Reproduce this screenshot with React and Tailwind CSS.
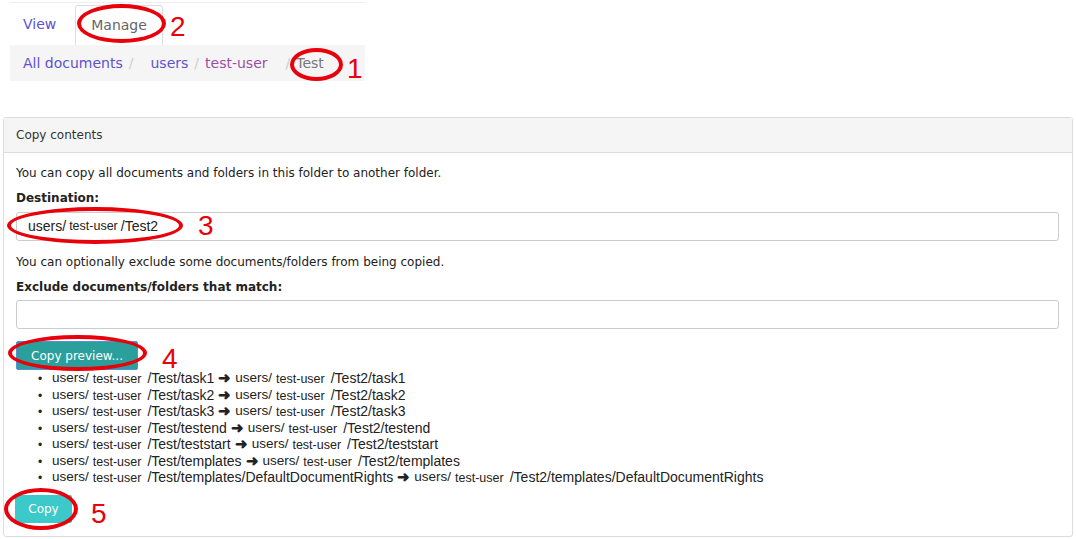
import React from 'react';

const items = [
  ['/Test/task1', '/Test2/task1'],
  ['/Test/task2', '/Test2/task2'],
  ['/Test/task3', '/Test2/task3'],
  ['/Test/testend', '/Test2/testend'],
  ['/Test/teststart', '/Test2/teststart'],
  ['/Test/templates', '/Test2/templates'],
  ['/Test/templates/DefaultDocumentRights', '/Test2/templates/DefaultDocumentRights'],
];

const Path = ({ rest }) => (
  <>
    <span className="text-[13.5px] relative top-[-1px]">users/</span>
    <span className="ml-[4px] text-[12.5px]">test-user</span>
    <span className="ml-[6px] text-[14px]">{rest}</span>
  </>
);

// red annotation ring + number
const Mark = ({ ring, num, numPos }) => (
  <>
    <div className={`absolute border-[4px] border-[#e8000b] rounded-[50%] ${ring}`} />
    <div
      className={`absolute text-[#e8000b] text-[28px] leading-none ${numPos}`}
      style={{ fontFamily: '"Liberation Sans", sans-serif' }}
    >
      {num}
    </div>
  </>
);

export default function App() {
  return (
    <div
      className="relative w-[1076px] h-[539px] bg-white overflow-hidden text-[#222]"
      style={{ fontFamily: '"DejaVu Sans", Verdana, sans-serif' }}
    >
      {/* tabs + breadcrumb */}
      <div className="ml-[10px] w-[355px] mt-[2px] border-t border-[#eee]">
        <div className="flex items-end h-[42px] text-[14px]">
          <a className="px-[13px] pb-[10px] text-[#5f52cf]">View</a>
          <div className="ml-[6px] h-[40px] px-[15px] flex items-center border border-b-0 border-[#ddd] rounded-t-[3px] bg-white text-[#666]">
            Manage
          </div>
        </div>
        <div className="h-[36px] bg-[#f5f5f5] flex items-center px-[13px] text-[14px]">
          <span className="text-[#5f52cf]">All documents</span>
          <span className="text-[#ccc] mx-[6px]">/</span>
          <span className="ml-[11px] text-[#5f52cf]">users</span>
          <span className="text-[#ccc] mx-[6px]">/</span>
          <span className="text-[#9a4fa8]">test-user</span>
          <span className="ml-[18px] mr-[6px] text-[#ccc]">/</span>
          <span className="text-[#777]">Test</span>
        </div>
      </div>

      {/* panel */}
      <div className="mx-[3px] mt-[36px] h-[420px] border border-[#ddd] rounded-[3px] bg-white">
        <div className="h-[35px] bg-[#f5f5f5] border-b border-[#ddd] flex items-center px-[12px] text-[12px] text-[#333]">
          Copy contents
        </div>
        <div className="px-[12px] pt-[12px] text-[12px]">
          <div className="leading-[16px]">You can copy all documents and folders in this folder to another folder.</div>
          <div className="mt-[9px] leading-[16px] font-bold">Destination:</div>
          <div className="mt-[6px] mr-[1px] h-[29px] border border-[#ccc] rounded-[3px] flex items-center px-[11px]" style={{ fontFamily: '"Liberation Sans", sans-serif' }}>
            <span className="text-[14px]">users/</span>
            <span className="ml-[3px] text-[12.5px]">test-user</span>
            <span className="ml-[3px] text-[14px]">/Test2</span>
          </div>
          <div className="mt-[13px] leading-[16px]">You can optionally exclude some documents/folders from being copied.</div>
          <div className="mt-[9px] leading-[16px] font-bold">Exclude documents/folders that match:</div>
          <div className="mt-[5px] mr-[1px] h-[29px] border border-[#ccc] rounded-[3px]" />
          <button className="mt-[12px] h-[29px] w-[122px] bg-[#2a9f9c] border border-[#5a8fd8] text-white text-[12px] rounded-[2px]">
            Copy preview...
          </button>
          <ul className="pl-[22px]" style={{ fontFamily: '"Liberation Sans", sans-serif' }}>
            {items.map(([a, b], i) => (
              <li key={i} className="h-[16.5px] leading-[16px] flex items-baseline whitespace-nowrap">
                <span className="w-[14px] text-[12px]">•</span>
                <Path rest={a} />
                <span className="mx-[4px] text-[15px] font-bold">➜</span>
                <Path rest={b} />
              </li>
            ))}
          </ul>
          <button className="mt-[9px] ml-[-1px] h-[28px] w-[57px] bg-[#3cc9c9] text-white text-[12px] rounded-[2px]">
            Copy
          </button>
        </div>
      </div>

      {/* annotations */}
      <Mark ring="left-[77px] top-[4px] w-[89px] h-[39px]" num="2" numPos="left-[170px] top-[13px]" />
      <Mark ring="left-[290px] top-[48px] w-[53px] h-[33px]" num="1" numPos="left-[347px] top-[55px]" />
      <Mark ring="left-[7px] top-[207px] w-[176px] h-[37px]" num="3" numPos="left-[198px] top-[212px]" />
      <Mark ring="left-[8px] top-[335px] w-[139px] h-[36px]" num="4" numPos="left-[162px] top-[345px]" />
      <Mark ring="left-[4px] top-[488px] w-[74px] h-[42px]" num="5" numPos="left-[91px] top-[500px]" />
    </div>
  );
}
